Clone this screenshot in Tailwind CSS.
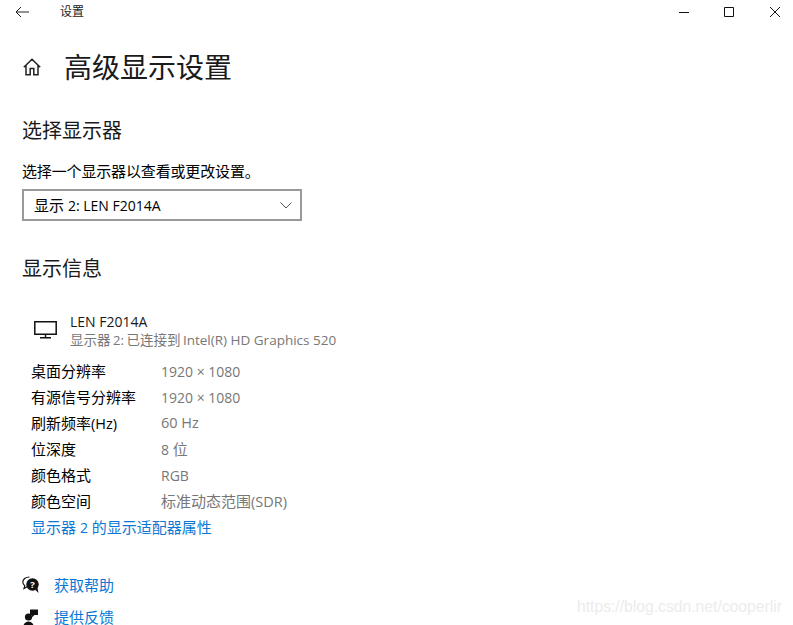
<!doctype html>
<html>
<head>
<meta charset="utf-8">
<script src="https://cdn.jsdelivr.net/npm/@tailwindcss/browser@4"></script>
</head>
<body class="bg-white">
<div class="relative w-[793px] h-[625px] overflow-hidden bg-white text-black font-['Open_Sans','Noto_Sans_CJK_SC',sans-serif]">
  <header class="flex h-[24px] items-center">
    <svg class="ml-[15px] w-[14px] h-[12px]" viewBox="0 0 14 12" fill="none" stroke="#222" stroke-width="1"><path d="M14 6H1M6 1 1 6l5 5"/></svg>
    <span class="ml-[31px] text-[12px] leading-[24px] text-[#222]">设置</span>
    <div class="ml-auto flex items-center">
      <svg class="w-[10px] h-[10px] mr-[35px]" viewBox="0 0 10 10" fill="none" stroke="#111" stroke-width="1"><path d="M0 5.5h10"/></svg>
      <svg class="w-[10px] h-[10px] mr-[36px]" viewBox="0 0 10 10" fill="none" stroke="#111" stroke-width="1"><path d="M.5.5h9v9h-9z"/></svg>
      <svg class="w-[10px] h-[10px] mr-[13px]" viewBox="0 0 10 10" fill="none" stroke="#111" stroke-width="1"><path d="M0 0l10 10M10 0 0 10"/></svg>
    </div>
  </header>
  <div class="mt-[21px] flex h-[44px] items-center pl-[23px]">
    <svg class="w-[18px] h-[18px]" viewBox="0 0 18 18" fill="none" stroke="#222" stroke-width="1.500"><path d="M.8 9.300 9 1.300l8.200 8M3 7.500v9.200h4.200v-6.200h3.600v6.200H15V7.500"/></svg>
    <h1 class="ml-[23px] text-[28px] leading-[44px] font-normal text-[#1a1a1a]">高级显示设置</h1>
  </div>
  <h2 class="ml-[22px] mt-[27px] text-[20px] leading-[30px] text-[#1a1a1a]">选择显示器</h2>
  <p class="ml-[22px] mt-[14px] text-[15px] leading-[22px] tracking-[-0.15px]">选择一个显示器以查看或更改设置。</p>
  <div class="ml-[22px] mt-[7px] flex h-[32px] w-[280px] items-center border-2 border-[#999] pl-[10px] pr-[8px] text-[15px]">
    <span>显示 <span class="text-[14px]">2: LEN F2014A</span></span>
    <svg class="ml-auto w-[12px] h-[7px]" viewBox="0 0 12 7" fill="none" stroke="#555" stroke-width="1"><path d="M.5.5 6 6l5.500-5.500"/></svg>
  </div>
  <h2 class="ml-[22px] mt-[33px] text-[20px] leading-[30px] text-[#1a1a1a]">显示信息</h2>
  <div class="mt-[29px] ml-[34px] flex items-start">
    <svg class="mt-[8px] w-[23px] h-[18px]" viewBox="0 0 23 18" fill="none" stroke="#111" stroke-width="1.500"><path d="M.8.8h21.400v12.400H.8zM11.500 13.300v3M6 16.800h11"/></svg>
    <div class="ml-[13px]">
      <div class="text-[14px] leading-[18px] text-[#1a1a1a]">LEN F2014A</div>
      <div class="text-[13.500px] leading-[18px] text-[#777] [word-spacing:-1px]">显示器 <span class="text-[13px]">2:</span> 已连接到 <span class="text-[13.500px] [word-spacing:0px]">Intel(R) HD Graphics 520</span></div>
    </div>
  </div>
  <dl class="mt-[9px] ml-[31px] grid grid-cols-[130px_1fr] auto-rows-[26px] items-center text-[15px]">
    <dt>桌面分辨率</dt><dd class="text-[14px] text-[#777]">1920 × 1080</dd>
    <dt>有源信号分辨率</dt><dd class="text-[14px] text-[#777]">1920 × 1080</dd>
    <dt>刷新频率<span class="text-[14.500px]">(Hz)</span></dt><dd class="text-[14.500px] text-[#777]">60 Hz</dd>
    <dt>位深度</dt><dd class="text-[14px] text-[#777]">8 <span class="text-[15px]">位</span></dd>
    <dt>颜色格式</dt><dd class="text-[14px] text-[#777]">RGB</dd>
    <dt>颜色空间</dt><dd class="text-[#777]">标准动态范围<span class="text-[14.500px]">(SDR)</span></dd>
  </dl>
  <a class="ml-[31px] block text-[15px] leading-[26px] text-[#0a78d4]">显示器 <span class="text-[14px]">2</span> 的显示适配器属性</a>
  <div class="mt-[36px] ml-[22px] flex flex-col gap-[16px] text-[15px] leading-[16px] text-[#0a78d4]">
    <div class="flex h-[16px] items-center">
      <svg class="w-[18px] h-[18px] shrink-0" viewBox="0 0 18 18"><path d="M7.500 1C3.500 1 .8 3.300.8 6c0 1.500.8 2.800 2 3.700L2 12.500l3.200-1.800" fill="none" stroke="#111" stroke-width="1.200"/><circle cx="10.500" cy="8.500" r="6.200" fill="#111"/><path d="m13 13.500 3.500 3.500-1-5z" fill="#111"/><text x="10.500" y="12" text-anchor="middle" font-size="9.500" font-weight="700" fill="#fff">?</text></svg>
      <span class="ml-[14px]">获取帮助</span>
    </div>
    <div class="flex h-[16px] items-center">
      <svg class="w-[18px] h-[16px] shrink-0" viewBox="0 1 18 16" fill="#111"><circle cx="6.500" cy="9" r="3.600"/><path d="M1 20c0-4 2.500-6.500 5.500-6.500S12 16 12 20z"/><path d="M8 1.500h8V7h-3.500L10 9.200V7H8z"/></svg>
      <span class="ml-[14px]">提供反馈</span>
    </div>
  </div>
  <div class="absolute left-[577px] top-[597px] font-['Liberation_Sans',sans-serif] text-[15.700px] leading-[20px] text-[#ececec]">https://blog.csdn.net/cooperlir</div>
</div>
</body>
</html>
